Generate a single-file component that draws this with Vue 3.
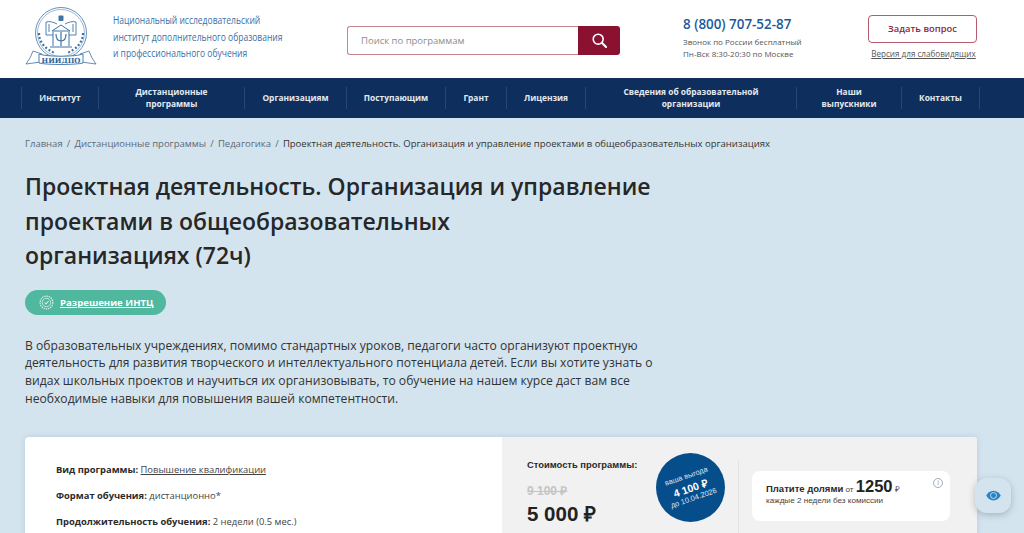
<script setup>
const navItems = [
  { label: 'Институт', width: 77 },
  { label: 'Дистанционные программы', width: 146, wrap: 100 },
  { label: 'Организациям', width: 102 },
  { label: 'Поступающим', width: 99 },
  { label: 'Грант', width: 61 },
  { label: 'Лицензия', width: 79 },
  { label: 'Сведения об образовательной организации', width: 211, wrap: 160 },
  { label: 'Наши выпускники', width: 105, wrap: 70 },
  { label: 'Контакты', width: 79 },
];

const crumbs = ['Главная', 'Дистанционные программы', 'Педагогика'];
</script>

<template>
  <div class="page">
    <header class="top">
      <div class="brand">
        <svg class="logo" viewBox="0 0 72 60" width="72" height="60" fill="none" stroke="#3f73a8">
          <circle cx="36" cy="26" r="25.500" stroke-width="0.800" />
          <circle cx="36" cy="26" r="23.500" stroke-width="0.500" />
          <path d="M32 17c-4-2-7-3-11-2v13h7M40 17c4-2 7-3 11-2v13h-7M24 17v8M48 17v8" stroke-width="0.900" />
          <path d="M36 18l-9 6h18zM28 25v14M44 25v14M25 40h22" stroke-width="1" />
          <path d="M31 27c0 5 1.500 7 5 7s5-2 5-7M36 25v14" stroke-width="1.200" />
          <rect x="33.500" y="8.500" width="5" height="5.500" rx="1" fill="#3f73a8" stroke="none" />
          <path d="M14 26c0 9 6 16 16 20M58 26c0 9-6 16-16 20" stroke-width="2.200" stroke-dasharray="2 2" />
          <path d="M8 44l9 3-1 8-15 2 4-6zM64 44l-9 3 1 8 15 2-4-6z" fill="#fff" stroke-width="0.800" />
          <path d="M14 47c8 3 36 3 44 0v9c-8 2-36 2-44 0z" fill="#fff" stroke-width="0.900" />
          <text x="36" y="55.500" text-anchor="middle" class="logo-text">НИИДПО</text>
        </svg>
        <p class="brand-name">
          <span>Национальный исследовательский</span>
          <span>институт дополнительного образования</span>
          <span>и профессионального обучения</span>
        </p>
      </div>

      <div class="search">
        <div class="search-input">Поиск по программам</div>
        <button class="search-btn" type="button">
          <svg viewBox="0 0 16 16" width="15" height="15" fill="none" stroke="#fff" stroke-width="1.700">
            <circle cx="6.600" cy="6.600" r="5.300" />
            <path d="M10.500 10.500l4.500 4.500" stroke-width="2.200" stroke-linecap="round" />
          </svg>
        </button>
      </div>

      <div class="contacts">
        <a class="phone">8 (800) 707-52-87</a>
        <p>Звонок по России бесплатный</p>
        <p>Пн-Вск 8:30-20:30 по Москве</p>
      </div>

      <div class="actions">
        <button class="ask" type="button">Задать вопрос</button>
        <a class="low-vision">Версия для слабовидящих</a>
      </div>
    </header>

    <nav class="nav">
      <a v-for="item in navItems" :key="item.label" class="nav-item" :style="{ width: item.width + 'px' }">
        <span :style="item.wrap ? { maxWidth: item.wrap + 'px' } : null">{{ item.label }}</span>
      </a>
    </nav>

    <main class="content">
      <div class="crumbs">
        <template v-for="c in crumbs" :key="c">
          <a>{{ c }}</a><i>/</i>
        </template>
        <span>Проектная деятельность. Организация и управление проектами в общеобразовательных организациях</span>
      </div>

      <h1>Проектная деятельность. Организация и управление проектами в общеобразовательных организациях&nbsp;(72ч)</h1>

      <a class="permit">
        <svg viewBox="0 0 16 16" width="15" height="15" fill="none" stroke="#d5efe7" stroke-width="0.900">
          <circle cx="8" cy="8" r="6.800" stroke-dasharray="1.600 0.800" stroke-width="1.300" />
          <circle cx="8" cy="8" r="4.500" />
          <path d="M6 8l1.500 1.500L10.200 6.600" stroke-width="1.100" />
        </svg>
        <span>Разрешение ИНТЦ</span>
      </a>

      <p class="lead">В образовательных учреждениях, помимо стандартных уроков, педагоги часто организуют проектную деятельность для развития творческого и интеллектуального потенциала детей. Если вы хотите узнать о видах школьных проектов и научиться их организовывать, то обучение на нашем курсе даст вам все необходимые навыки для повышения вашей компетентности.</p>

      <section class="card">
        <div class="info">
          <p><b>Вид программы:</b> <a>Повышение квалификации</a></p>
          <p><b>Формат обучения:</b> дистанционно*</p>
          <p><b>Продолжительность обучения:</b> 2 недели (0.5 мес.)</p>
        </div>
        <div class="price-box">
          <div class="price">
            <div class="price-title">Стоимость программы:</div>
            <div class="price-old">9 100 ₽</div>
            <div class="price-now">5 000 ₽</div>
          </div>
          <div class="saving">
            <div class="saving-text">
              <span>ваша выгода</span>
              <b>4 100 ₽</b>
              <span>до 10.04.2026</span>
            </div>
          </div>
          <div class="split-wrap">
            <div class="split">
              <div class="split-main"><b>Платите долями</b> от <strong>1250</strong> ₽</div>
              <div class="split-sub">каждые 2 недели без комиссии</div>
              <span class="split-info">i</span>
            </div>
          </div>
        </div>
      </section>
    </main>

    <button class="eye" type="button">
      <svg viewBox="0 0 20 14" width="15" height="11">
        <path d="M10 .5C5.500.5 2 3.500.3 7 2 10.500 5.500 13.500 10 13.500s8-3 9.700-6.500C18 3.500 14.500.5 10 .5z" fill="#2584c8" />
        <circle cx="10" cy="7" r="4" fill="none" stroke="#d4e4ef" stroke-width="1.200" />
        <circle cx="10" cy="7" r="2" fill="#2584c8" />
      </svg>
    </button>
  </div>
</template>

<style>
html, body {
  margin: 0;
  height: 533px;
  overflow: hidden;
}
</style>

<style scoped>
.page {
  position: relative;
  height: 533px;
  overflow: hidden;
  background: #d4e4ef;
  font-family: "Open Sans", sans-serif;
  color: #2a2a2a;
}

p {
  margin: 0;
}

.top {
  height: 78px;
  background: #fff;
  display: flex;
  align-items: center;
  padding: 0 47px 0 25px;
  box-sizing: border-box;
}

.brand {
  display: flex;
  align-items: center;
  gap: 16px;
  width: 322px;
  flex: none;
}

.logo {
  flex: none;
  margin-top: -5px;
}

.logo-text {
  font-family: "DejaVu Serif", serif;
  font-size: 7px;
  font-weight: 700;
  fill: #2d5f95;
  stroke: none;
}

.brand-name {
  font-size: 11.500px;
  line-height: 16.500px;
  color: #3a70a6;
  margin-top: -4px;
}

.brand-name span {
  display: block;
  white-space: nowrap;
  width: 180px;
  transform: scaleX(0.74);
  transform-origin: left center;
}

.search {
  display: flex;
  width: 273px;
  height: 29px;
  flex: none;
  margin-top: 3px;
}

.search-input {
  flex: 1;
  box-sizing: border-box;
  border: 1px solid #c4858f;
  border-right: 0;
  border-radius: 3px 0 0 3px;
  padding-left: 13px;
  font-size: 9.500px;
  line-height: 27px;
  color: #8d8d8d;
}

.search-btn {
  width: 42px;
  border: 0;
  border-radius: 0 3px 3px 0;
  background: #8a1230;
  display: flex;
  align-items: center;
  justify-content: center;
  padding: 0;
}

.contacts {
  margin-left: 63px;
  margin-top: -4px;
  width: 185px;
  flex: none;
  font-size: 8px;
  line-height: 12px;
  color: #555;
}

.phone {
  display: block;
  font-size: 13.400px;
  line-height: 18px;
  font-weight: 600;
  color: #1c5a9c;
  margin-bottom: 3px;
}

.actions {
  display: flex;
  flex-direction: column;
  align-items: center;
  width: 109px;
  flex: none;
  margin-left: auto;
  margin-top: -4px;
}

.ask {
  width: 109px;
  height: 28px;
  box-sizing: border-box;
  border: 1px solid #b65a6d;
  border-radius: 4px;
  background: #fff;
  font-family: inherit;
  font-size: 9.400px;
  font-weight: 600;
  color: #8a1f3a;
  padding: 0;
}

.low-vision {
  margin: 5px 0 0 2px;
  font-size: 8.100px;
  line-height: 12px;
  color: #555;
  text-decoration: underline;
  white-space: nowrap;
}

.nav {
  height: 40px;
  background: #0e2f5e;
  box-sizing: border-box;
  display: flex;
  align-items: center;
  padding-left: 21px;
}

.nav-item {
  height: 22px;
  box-sizing: border-box;
  border-left: 1px solid #26477a;
  display: flex;
  align-items: center;
  justify-content: center;
  text-align: center;
  font-size: 8.400px;
  line-height: 12px;
  font-weight: 700;
  color: #e4e9f0;
}

.nav-item:last-child {
  border-right: 1px solid #26477a;
}

.content {
  padding: 18px 47px 0 25px;
}

.crumbs {
  font-size: 9.500px;
  line-height: 15px;
  color: #5d6a75;
  white-space: nowrap;
}

.crumbs i {
  font-style: normal;
  margin: 0 4.200px;
}

.crumbs span {
  color: #333;
}

h1 {
  margin: 18px 0 0;
  width: 640px;
  font-size: 23px;
  line-height: 34.500px;
  font-weight: 600;
  color: #272727;
}

.permit {
  display: inline-flex;
  align-items: center;
  gap: 6px;
  margin-top: 17px;
  height: 25px;
  padding: 0 12px 0 14px;
  border-radius: 13px;
  background: #4fb89e;
  color: #fff;
  font-size: 9.600px;
  font-weight: 700;
}

.permit span {
  text-decoration: underline;
}

.lead {
  margin-top: 22px;
  width: 640px;
  font-size: 12.140px;
  line-height: 17.700px;
  color: #333;
}

.card {
  margin-top: 30px;
  display: flex;
  height: 200px;
  border-radius: 4px;
  overflow: hidden;
  background: #fff;
  box-shadow: 0 0 6px rgba(70, 100, 130, 0.18);
}

.info {
  width: 477px;
  flex: none;
  box-sizing: border-box;
  padding: 25px 0 0 31px;
  font-size: 9.400px;
  line-height: 15px;
  color: #444;
}

.info p {
  margin-bottom: 11px;
}

.info b {
  color: #2a2a2a;
}

.info a {
  text-decoration: underline;
}

.price-box {
  flex: 1;
  display: flex;
  background: #f1f1f1;
  font-family: "Liberation Sans", Arial, sans-serif;
}

.price {
  width: 125px;
  flex: none;
  padding: 20px 0 0 25px;
}

.price-title {
  font-size: 9.400px;
  line-height: 15px;
  font-weight: 700;
  white-space: nowrap;
}

.price-old {
  margin-top: 11px;
  font-size: 12px;
  line-height: 16px;
  font-weight: 700;
  color: #c4c4c4;
  text-decoration: line-through;
}

.price-now {
  margin-top: 2px;
  font-size: 20.500px;
  line-height: 26px;
  font-weight: 700;
  color: #222;
  white-space: nowrap;
}

.saving {
  width: 69px;
  height: 69px;
  flex: none;
  margin: 16px 0 0 4px;
  border-radius: 50%;
  background: #064d8c;
  display: flex;
  align-items: center;
  justify-content: center;
}

.saving-text {
  display: flex;
  flex-direction: column;
  align-items: center;
  color: #d9e6f2;
  font-size: 7.500px;
  line-height: 10.500px;
  transform: rotate(-19deg);
  white-space: nowrap;
}

.saving-text b {
  font-size: 10.500px;
  line-height: 12px;
  color: #fff;
}

.split-wrap {
  flex: 1;
  margin: 23px 0 0 13px;
  padding: 11px 27px 0 13px;
  border-left: 1px solid #e2e2e2;
}

.split {
  position: relative;
  height: 50px;
  box-sizing: border-box;
  padding: 5px 14px;
  border-radius: 8px;
  background: #fff;
  color: #444;
  font-size: 8.100px;
  white-space: nowrap;
}

.split-main {
  line-height: 20px;
}

.split-main b {
  font-size: 9.500px;
  color: #2a2a2a;
}

.split-main strong {
  font-size: 16.500px;
  color: #222;
}

.split-sub {
  margin-top: -4px;
  line-height: 10px;
}

.split-info {
  position: absolute;
  top: 7px;
  right: 7px;
  width: 8px;
  height: 8px;
  border: 1px solid #aaa;
  border-radius: 50%;
  font-size: 7px;
  line-height: 8px;
  text-align: center;
  color: #999;
}

.eye {
  position: absolute;
  left: 975px;
  top: 478px;
  width: 36px;
  height: 35px;
  border: 0;
  border-radius: 12px;
  background: #d4e4ef;
  box-shadow: 0 2px 7px rgba(50, 70, 90, 0.3);
  display: flex;
  align-items: center;
  justify-content: center;
  padding: 0;
}
</style>
